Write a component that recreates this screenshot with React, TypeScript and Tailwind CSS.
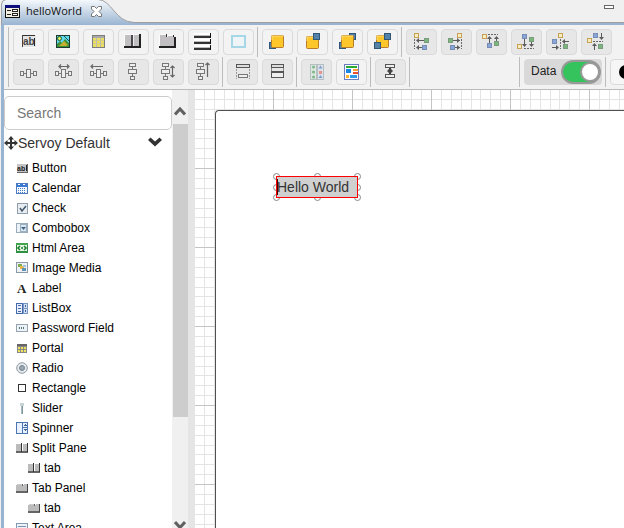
import React from "react";

type R = [number, number, number, number, string];

function Px({ r, w = 21, h = 18, faded, children }: { r?: R[]; w?: number; h?: number; faded?: boolean; children?: React.ReactNode }) {
  return (
    <svg width={w} height={h} viewBox={`0 0 ${w} ${h}`} className={faded ? "shrink-0 overflow-visible opacity-70" : "shrink-0 overflow-visible"} aria-hidden="true">
      <g shapeRendering="crispEdges">
        {(r ?? []).map(([x, y, rw, rh, f], i) => (
          <rect key={i} x={x} y={y} width={rw} height={rh} fill={f} />
        ))}
      </g>
      {children}
    </svg>
  );
}

const box = (x: number, y: number, w: number, h: number, edge: string, fill: string, t = 1): R[] => [
  [x, y, w, h, edge],
  [x + t, y + t, w - 2 * t, h - 2 * t, fill],
];

/* Palette widgets on the first toolbar row */
const imageIcon = (
  <Px r={[...box(3, 2, 14, 13, "#1d3a30", "#5fd8ec"), [5, 4, 3, 3, "#f5e04a"], [4, 13, 12, 1, "#3f6e22"]]}>
    <path d="M4 14V11l3-3 2 2 3-4 4 4v4z" fill="#3e8e3a" />
    <path d="M6 13l5-5 4 4-2 1z" fill="#c3b02e" />
    <path d="M11 3l5 5" stroke="#14584d" />
    <circle cx="6.500" cy="5.500" r="2" fill="#dff05a" stroke="#1c5a44" />
  </Px>
);
const tableIcon = (
  <Px
    r={[
      [4, 2, 13, 13, "#7d7d7d"], [5, 3, 11, 2, "#a9a9a9"], [5, 5, 11, 9, "#b9b9b4"],
      [5, 5, 3, 9, "#eadf62"], [9, 5, 3, 9, "#eadf62"], [13, 5, 3, 9, "#eadf62"],
      [5, 7, 11, 1, "#d2cb8b"], [5, 10, 11, 1, "#d2cb8b"],
    ]}
  />
);
const splitIcon = (
  <Px r={[[1, 1, 17, 14, "#fafafa"], [2, 2, 15, 12, "#c1bfc1"], [1, 13, 17, 2, "#222"], [8, 2, 2, 11, "#4c4c4c"], [10, 2, 1, 11, "#eee"], [16, 1, 2, 14, "#222"]]} />
);
const tabIcon = (
  <Px r={[[1, 1, 8, 13, "#fafafa"], [2, 2, 7, 11, "#c1bfc1"], [8, 4, 9, 9, "#c1bfc1"], [8, 1, 1, 3, "#333"], [10, 2, 6, 1, "#fafafa"], [10, 3, 5, 1, "#c1bfc1"], [15, 2, 1, 2, "#222"], [16, 4, 2, 11, "#222"], [1, 13, 17, 2, "#222"]]} />
);
const barsIcon = (
  <Px
    r={[0, 6, 12].flatMap((y): R[] => [
      [1, y, 17, 3, "#fff"], [1, y + 2, 17, 1, "#bbb"], [1, y + 3, 17, 2, "#333"], [17, y, 1, 5, "#111"],
    ])}
  />
);

/* Stacking order icons */
const yel = (x: number, y: number) => (
  <g>
    <rect x={x + 0.5} y={y + 0.5} width="12" height="12" rx="1" fill="#fdc62b" stroke="#b77b2c" />
    <path d={`M${x + 1} ${y + 5}V${y + 1}H${x + 12}`} stroke="#ffe27b" fill="none" />
  </g>
);
const blu = (x: number, y: number) => <rect x={x + 0.5} y={y + 0.5} width="6" height="6" fill="#5583a8" stroke="#2f5878" />;

/* Alignment icons: three squares, a dashed guide and arrows between them */
function Align({ y, g, b, dash, shafts, heads }: { y: [number, number]; g: [number, number]; b: [number, number]; dash: string; shafts: string; heads: string }) {
  return (
    <Px faded r={[...box(y[0], y[1], 5, 5, "#b88318", "#fff0ae"), ...box(g[0], g[1], 5, 5, "#4c7d52", "#4fa052"), ...box(b[0], b[1], 5, 5, "#4867a0", "#628bcf")]}>
      <path d={dash} stroke="#333" strokeDasharray="2 1" shapeRendering="crispEdges" />
      <path d={shafts} stroke="#222" shapeRendering="crispEdges" />
      <path d={heads} fill="#222" />
    </Px>
  );
}

const G = "#777";
const horiz: R[] = [[5, 10, 12, 1, G], ...box(2, 8, 4, 5, G, "#eee"), ...box(8, 6, 5, 9, G, "#eee"), ...box(15, 8, 4, 5, G, "#eee")];
const vert = (x: number): R[] => [[x + 4, 1, 1, 15, G], ...box(x + 1, 0, 7, 4, G, "#eee"), ...box(x, 6, 9, 5, G, "#eee"), ...box(x + 2, 13, 5, 4, G, "#eee")];
const line = (d: string) => <path d={d} stroke="#666" fill="none" strokeWidth="1.200" />;

type Tool = { name: string; icon: React.ReactNode; off?: boolean };

const row1: Tool[][] = [
  [
    {
      name: "Button",
      icon: (
        <Px r={[[4, 2, 14, 13, "#e4e4e4"], [4, 2, 13, 1, "#333"], [4, 2, 1, 12, "#444"], [5, 14, 13, 1, "#fff"], [16, 5, 1, 8, "#222"]]}>
          <text x="5" y="12" className="font-['Liberation_Sans',Arial,sans-serif] text-[10px] font-bold" fill="#444">ab</text>
        </Px>
      ),
    },
    { name: "Image", icon: imageIcon },
    { name: "Portal", icon: tableIcon },
    { name: "Split pane", icon: splitIcon },
    { name: "Tab panel", icon: tabIcon },
    { name: "Accordion", icon: barsIcon },
    { name: "Group", icon: <Px r={box(3, 2, 15, 13, "#a6d7e6", "#eff5f7", 2)} /> },
  ],
  [
    { name: "Send backward", icon: <Px>{blu(2, 9)}{yel(4, 2)}</Px> },
    { name: "Bring forward", icon: <Px>{yel(4, 3)}{blu(11, 0)}</Px> },
    { name: "Send to back", icon: <Px>{blu(2, 9)}{blu(12, 0)}{yel(4, 2)}</Px> },
    { name: "Bring to front", icon: <Px>{yel(4, 2)}{blu(2, 9)}{blu(12, 0)}</Px> },
  ],
  [
    { name: "Align left", off: true, icon: <Align y={[3, 0]} g={[13, 5]} b={[11, 12]} dash="M3.500 6V16" shafts="M6 7.500H13M6 14.500H11" heads="M5 7.500l3-2.500v5zM5 14.500l3-2.500v5z" /> },
    { name: "Align right", off: true, icon: <Align y={[11, 0]} g={[2, 5]} b={[4, 12]} dash="M15.500 6V16" shafts="M7 7.500H14M9 14.500H14" heads="M14 7.500l-3-2.500v5zM14 14.500l-3-2.500v5z" /> },
    { name: "Align top", off: true, icon: <Align y={[1, 1]} g={[13, 8]} b={[6, 10]} dash="M7 1.500H17" shafts="M8.500 4V10M15.500 4V8" heads="M8.500 3l-2.500 3h5zM15.500 3l-2.500 3h5z" /> },
    { name: "Align bottom", off: true, icon: <Align y={[1, 11]} g={[13, 4]} b={[6, 1]} dash="M8 15.500H18" shafts="M8.500 6V13M15.500 9V13" heads="M8.500 14l-2.500-3h5zM15.500 14l-2.500-3h5z" /> },
    { name: "Align center", off: true, icon: <Align y={[7, 0]} g={[12, 11]} b={[1, 6]} dash="M9.500 6V16" shafts="M12 8.500H18M1 14.500H7" heads="M11 8.500l3-2.500v5zM8 14.500l-3-2.500v5z" /> },
    { name: "Align middle", off: true, icon: <Align y={[1, 5]} g={[12, 11]} b={[7, 0]} dash="M7 8.500H17" shafts="M15.500 0V6M8.500 11V17" heads="M15.500 7l-2.500-3h5zM8.500 10l-2.500 3h5z" /> },
  ],
];

const row2: Tool[][] = [
  [
    { name: "Distribute horizontal spacing", off: true, icon: <Px r={horiz} /> },
    { name: "Distribute horizontal centers", off: true, icon: <Px r={horiz}>{line("M6 3.500H16M8 1.500L6 3.500L8 5.500M14 1.500L16 3.500L14 5.500")}</Px> },
    { name: "Distribute leftward", off: true, icon: <Px r={horiz}>{line("M3 3.500H15M5 1.500L3 3.500L5 5.500")}</Px> },
    { name: "Distribute vertical spacing", off: true, icon: <Px r={vert(5)} /> },
    { name: "Distribute vertical centers", off: true, icon: <Px r={vert(3)}>{line("M14.500 3V14M12.500 5L14.500 3L16.500 5M12.500 12L14.500 14L16.500 12")}</Px> },
    { name: "Distribute upward", off: true, icon: <Px r={vert(3)}>{line("M14.500 0V14M12.500 2L14.500 0L16.500 2")}</Px> },
  ],
  [
    {
      name: "Same width", off: true,
      icon: (
        <Px r={[...box(4, 1, 14, 4, "#555", "#ddd"), ...box(6, 11, 10, 4, "#777", "#eee")]}>
          <path d="M4.500 6V16M17.500 6V16" stroke="#999" strokeDasharray="2 1" shapeRendering="crispEdges" />
        </Px>
      ),
    },
    { name: "Same height", off: true, icon: <Px r={[...box(4, 1, 13, 4, "#555", "#ddd"), [4, 5, 1, 4, "#888"], [16, 5, 1, 4, "#888"], [4, 8, 13, 2, "#555"], ...box(4, 9, 13, 6, "#555", "#eee")]} /> },
  ],
  [
    {
      name: "Anchoring", off: true,
      icon: (
        <Px faded r={[...box(4, 1, 7, 16, "#a1aeb0", "#d9ead9"), ...box(11, 1, 7, 16, "#a1aeb0", "#d8e1ef")]}>
          {[4, 9, 14].map((y) => <circle key={y} cx="7.500" cy={y} r="1.500" fill="#52a069" />)}
          <path d="M14.500 2.500l2 3h-4zM14.500 12l2 3h-4z" fill="#537fbe" /><rect x="13" y="8" width="3" height="3" fill="#e57360" />
        </Px>
      ),
    },
    {
      name: "Tab sequence",
      icon: <Px r={[...box(3, 1, 15, 16, "#6d7dbe", "#fff"), [5, 3, 11, 2, "#2ca92f"], [5, 6, 5, 4, "#1b87e5"], [12, 6, 5, 2, "#ff9d31"], [12, 9, 5, 2, "#e95030"], [5, 12, 3, 3, "#ffb328"], [9, 12, 7, 3, "#329be9"]]} />,
    },
  ],
  [
    {
      name: "Zoom to fit", off: true,
      icon: <Px r={[...box(5, 1, 10, 4, "#555", "#eee"), ...box(5, 11, 10, 4, "#555", "#eee"), [9, 5, 2, 6, "#333"]]}><path d="M7 8l3-3 3 3-3 3z" fill="#444" /></Px>,
    },
  ],
];

function Sep() {
  return <span className="mx-[3px] w-px shrink-0 self-stretch bg-[#bcbcbc]" />;
}

function ToolButton({ tool }: { tool: Tool }) {
  return (
    <button
      type="button"
      aria-label={tool.name}
      disabled={tool.off}
      className={`flex h-[26px] w-[31px] shrink-0 items-center justify-center rounded border border-[#dadada] ${tool.off ? "bg-[#e7e7e7]" : "bg-[#f3f3f3]"}`}
    >
      {tool.icon}
    </button>
  );
}

function ToolGroups({ groups }: { groups: Tool[][] }) {
  return (
    <>
      {groups.map((g, i) => (
        <React.Fragment key={i}>
          <div className="flex shrink-0 items-center gap-1 pl-px">
            {g.map((t) => <ToolButton key={t.name} tool={t} />)}
          </div>
          {(i < groups.length - 1 || groups === row2) && <Sep />}
        </React.Fragment>
      ))}
    </>
  );
}

/* Palette icons, 12 by 12 */
const splitSmall = <Px w={12} h={12} r={[[0, 2, 12, 9, "#bcbcbc"], [0, 9, 12, 2, "#666"], [5, 1, 1, 9, "#333"], [6, 2, 1, 7, "#fff"], [11, 1, 1, 9, "#333"]]} />;
const tabSmall = <Px w={12} h={12} r={[[0, 3, 12, 8, "#bcbcbc"], [1, 2, 5, 1, "#ccc"], [6, 2, 1, 2, "#666"], [8, 2, 3, 2, "#bcbcbc"], [0, 9, 12, 2, "#666"], [11, 2, 1, 8, "#444"]]} />;
const listSmall = (
  <Px w={12} h={12} r={[...box(0, 1, 7, 11, "#4569ad", "#e8effb"), [2, 3, 3, 1, "#4569ad"], [2, 6, 3, 1, "#4569ad"], [2, 9, 3, 1, "#4569ad"], ...box(7, 1, 5, 6, "#7897c5", "#d4e2f5"), ...box(7, 6, 5, 6, "#7897c5", "#d4e2f5"), [9, 3, 1, 2, "#3e5f94"], [9, 8, 1, 2, "#3e5f94"]]} />
);

const items: { label: string; icon: React.ReactNode; sub?: boolean }[] = [
  {
    label: "Button",
    icon: <Px w={12} h={12} r={[[1, 2, 11, 9, "#c4c4c4"], [1, 10, 11, 1, "#666"], [11, 2, 1, 9, "#666"], [10, 3, 1, 6, "#222"]]}><text x="1" y="9" className="font-['Liberation_Sans',Arial,sans-serif] text-[7px] font-bold" fill="#222">ab</text></Px>,
  },
  { label: "Calendar", icon: <Px w={12} h={12} r={[...box(0, 1, 12, 11, "#4c7bc0", "#f3f8ff"), [1, 2, 10, 3, "#3c79d2"], [2, 2, 2, 1, "#fff"], [7, 2, 2, 1, "#fff"], ...[6, 8, 10].flatMap((y): R[] => [2, 4, 6, 8].map((x): R => [x, y, 1, 1, "#4d80c7"]))]} /> },
  { label: "Check", icon: <Px w={12} h={12} r={box(1, 1, 11, 11, "#8d9eae", "#e9edf0")}><path d="M4 6l2 3 4-5" stroke="#40586e" fill="none" strokeWidth="1.500" /></Px> },
  { label: "Combobox", icon: <Px w={12} h={12} r={[...box(0, 1, 12, 10, "#9cabbc", "#edf2f7"), ...box(4, 2, 7, 8, "#9cb0c4", "#dbe6f0")]}><path d="M5 5h5l-2.500 3z" fill="#3f6585" /></Px> },
  { label: "Html Area", icon: <Px w={12} h={12} r={[...box(0, 1, 12, 10, "#2c843c", "#e7f5e4"), [0, 1, 12, 2, "#42a550"], [0, 9, 12, 2, "#2d9141"]]}><path d="M4 4L2 6l2 2M8 4l2 2-2 2M5 6h2" stroke="#167a29" fill="none" strokeWidth="1.500" /></Px> },
  { label: "Image Media", icon: <Px w={12} h={12} r={[...box(0, 0, 12, 11, "#8b9aaa", "#edf1f5"), [2, 2, 4, 3, "#7faa4f"], [4, 4, 4, 3, "#e6b64b"], [6, 6, 4, 3, "#5d93b7"], [7, 3, 3, 2, "#9fc0df"]]} /> },
  { label: "Label", icon: <Px w={12} h={12}><text x="1" y="11" className="font-['Liberation_Serif',serif] text-[13px] font-bold" fill="#222">A</text></Px> },
  { label: "ListBox", icon: listSmall },
  { label: "Password Field", icon: <Px w={12} h={12} r={[...box(0, 2, 12, 8, "#94a4b2", "#edf2f6"), [3, 5, 1, 2, "#60727e"], [5, 5, 1, 2, "#60727e"], [7, 5, 1, 2, "#60727e"]]} /> },
  { label: "Portal", icon: <Px w={12} h={12} r={[[1, 2, 10, 9, "#888"], [1, 2, 10, 2, "#666"], [2, 5, 2, 2, "#efe45b"], [5, 5, 2, 2, "#efe45b"], [8, 5, 2, 2, "#efe45b"], [2, 8, 2, 2, "#efe45b"], [5, 8, 2, 2, "#efe45b"], [8, 8, 2, 2, "#efe45b"]]} /> },
  { label: "Radio", icon: <Px w={12} h={12}><circle cx="6" cy="6" r="5.300" fill="#e8ecef" stroke="#8d9aa5" /><circle cx="6" cy="6" r="2.500" fill="#9aa7b2" stroke="#75838e" /></Px> },
  { label: "Rectangle", icon: <Px w={12} h={12} r={box(2, 2, 8, 8, "#333", "#fff")} /> },
  { label: "Slider", icon: <Px w={12} h={12} r={[[5, 1, 2, 11, "#a9bbc1"], [4, 1, 4, 3, "#c9d4d7"], [6, 4, 1, 8, "#82989f"]]} /> },
  { label: "Spinner", icon: <Px w={12} h={12} r={[...box(0, 0, 12, 12, "#4c75b4", "#e9f2ff"), [6, 0, 1, 12, "#4c75b4"], [7, 5, 5, 1, "#4c75b4"], [8, 3, 3, 1, "#405f8a"], [9, 2, 1, 1, "#405f8a"], [8, 7, 3, 1, "#405f8a"], [9, 8, 1, 1, "#405f8a"]]} /> },
  { label: "Split Pane", icon: splitSmall },
  { label: "tab", icon: splitSmall, sub: true },
  { label: "Tab Panel", icon: tabSmall },
  { label: "tab", icon: tabSmall, sub: true },
  { label: "Text Area", icon: <Px w={12} h={12} r={[...box(0, 1, 12, 11, "#8299b4", "#edf3f8"), [2, 4, 8, 1, "#7b91aa"], [2, 7, 8, 1, "#7b91aa"]]} /> },
];

function TitleBar() {
  return (
    <header className="relative flex h-[25px] shrink-0 items-start bg-[#f0f0f0]">
      <div className="absolute inset-x-0 bottom-0 h-[3px] border-t border-[#a0a0a0] bg-[#99b4d1]" />
      <svg width="140" height="25" viewBox="0 0 140 25" className="absolute left-0 top-0" aria-hidden="true">
        <defs>
          <linearGradient id="tab" x1="0" y1="0" x2="0" y2="1">
            <stop offset="0" stopColor="#f4f8fc" />
            <stop offset="1" stopColor="#99b4d1" />
          </linearGradient>
        </defs>
        <rect width="2" height="25" fill="#f0f0f0" />
        <path d="M2 25V4Q2 0 6 0H98C112 0 115 22 134 22.500V25Z" fill="url(#tab)" />
        <path d="M1.500 25V4Q2 0 6 -0.500M98 -0.500C112 0 115 22 134 22.500" fill="none" stroke="#a0a0a0" />
      </svg>
      <div className="relative flex h-[22px] items-center pl-[5px]">
        <Px w={15} h={13} r={[[0, 0, 15, 13, "#111"], [0, 0, 15, 3, "#10107c"], [1, 3, 13, 9, "#f2eee2"], [2, 5, 4, 1, "#222"], [2, 9, 4, 1, "#222"], ...box(7, 4, 6, 3, "#222", "#fff"), ...box(7, 8, 6, 3, "#222", "#fff")]} />
        <span className="ml-[6px] pb-px font-['Open_Sans','Noto_Sans',sans-serif] text-[11px] leading-4 text-[#111]">helloWorld</span>
        <button type="button" aria-label="Close helloWorld" className="ml-[9px]">
          <svg width="11" height="11" viewBox="0 0 11 11">
            <path d="M.5.5h3l2 2 2-2h3v2.500L8 5.500l2.500 2.500v2.500h-3l-2-2-2 2h-3V8L3 5.500.5 3z" fill="#fff" stroke="#777" />
          </svg>
        </button>
      </div>
      <button type="button" aria-label="Minimize" className="relative ml-auto mr-[10px] mt-[5px] h-1 w-[10px] border border-[#666] bg-white" />
    </header>
  );
}

function Toolbar() {
  return (
    <div className="flex h-[65px] shrink-0 overflow-hidden border-b border-[#bababa] bg-[#f2f2f2] pl-1 pt-[2px]">
      <span className="mr-[3px] h-[60px] w-px shrink-0 bg-[#bcbcbc]" />
      <div className="flex min-w-0 flex-1 flex-col">
        <div className="flex h-[30px] items-center">
          <ToolGroups groups={row1} />
        </div>
        <div className="flex h-[30px] items-center">
          <ToolGroups groups={row2} />
          <span className="w-[103px] shrink-0" />
          <Sep />
          <label className="ml-px flex h-[26px] shrink-0 items-center gap-[5px] rounded-sm bg-[#d9d9d9] pl-[7px] pr-px text-xs text-[#222]">
            <span className="pb-[3px]">Data</span>
            <span className="relative flex h-6 w-10">
              <input type="checkbox" role="switch" defaultChecked className="h-6 w-10 appearance-none rounded-full border-2 border-[#999] bg-[#a5b5a9] checked:bg-[#35c35d]" />
              <span className="pointer-events-none absolute right-px top-[2px] h-5 w-5 rounded-full border-2 border-[#999] bg-white" />
            </span>
          </label>
          <Sep />
          <div className="shrink-0 pl-px">
            <button type="button" aria-label="Contrast" className="flex h-[26px] w-[31px] items-center justify-center rounded border border-[#dadada] bg-[#f6f6f6]">
              <svg width="14" height="14" viewBox="0 0 14 14"><circle cx="7" cy="7" r="7" fill="#000" /></svg>
            </button>
          </div>
        </div>
      </div>
    </div>
  );
}

function Palette() {
  return (
    <aside className="flex w-[184px] shrink-0 bg-white">
      <div className="min-w-0 flex-1 overflow-hidden pt-[6px]">
        <input type="text" aria-label="Search" placeholder="Search" className="block h-[34px] w-full rounded-[5px] border border-[#ccc] bg-white px-3 text-sm placeholder:text-[#777]" />
        <button type="button" className="flex h-[25px] w-full items-center text-sm text-[#333]">
          <svg width="14" height="14" viewBox="0 0 14 14" aria-hidden="true">
            <path d="M7 0l3 3.500H8V6h2.500V4L14 7l-3.500 3V8H8v2.500h2L7 14l-3-3.500h2V8H3.500v2L0 7l3.500-3v2H6V3.500H4z" fill="#333" />
          </svg>
          <span>Servoy Default</span>
          <svg width="14" height="10" viewBox="0 0 14 10" className="mb-[2px] ml-auto mr-[10px]" aria-hidden="true">
            <path d="M0 3l2.500-2.500L7 4.500 11.500.5 14 3 7 9.500z" fill="#333" />
          </svg>
        </button>
        <ul className="pt-[3px] text-xs text-black">
          {items.map((it, i) => (
            <li key={i} className={`flex h-5 items-center gap-1 whitespace-nowrap ${it.sub ? "pl-6" : "pl-3"}`}>
              {it.icon}
              <span>{it.label}</span>
            </li>
          ))}
        </ul>
      </div>
      <div className="flex w-4 shrink-0 flex-col items-center justify-between bg-[#f0f0f0]">
        <div className="flex h-[34px] shrink-0 items-center pt-[8px]">
          <svg width="12" height="10" viewBox="0 0 12 10" aria-hidden="true"><path d="M1 8.500L6 3l5 5.500" stroke="#606060" strokeWidth="3" fill="none" /></svg>
        </div>
        <div className="flex w-full flex-1 flex-col pl-px">
          <div className="h-[74%] bg-[#cdcdcd]" />
        </div>
        <svg width="12" height="8" viewBox="0 0 12 8" className="shrink-0" aria-hidden="true"><path d="M1 2l5 5.500L11 2" stroke="#606060" strokeWidth="3" fill="none" /></svg>
      </div>
    </aside>
  );
}

const minor = [10, 20, 30, 40, 49, 59, 69];
const handles = [
  "-left-[3px] -top-[3px]", "left-1/2 -ml-[3px] -top-[3px]", "-right-[3px] -top-[3px]",
  "-left-[3px] top-1/2 -mt-[3px]", "-right-[3px] top-1/2 -mt-[3px]",
  "-left-[3px] -bottom-[3px]", "left-1/2 -ml-[3px] -bottom-[3px]", "-right-[3px] -bottom-[3px]",
];

function Canvas() {
  return (
    <main className="relative min-w-0 flex-1 overflow-hidden bg-white pl-5 pt-5">
      <svg className="absolute left-0 top-0 h-full w-full" aria-hidden="true">
        <defs>
          <pattern id="grid" x="-1" y="-1" width="79" height="79" patternUnits="userSpaceOnUse">
            <g shapeRendering="crispEdges">
              {minor.map((m) => (
                <g key={m} fill="#e4e4e4">
                  <rect x={m} y="0" width="1" height="79" />
                  <rect x="0" y={m} width="79" height="1" />
                </g>
              ))}
              <path d="M0 0h79v1H1v78H0z" fill="#c4c4c4" />
            </g>
          </pattern>
        </defs>
        <rect width="100%" height="100%" fill="url(#grid)" />
      </svg>
      <div className="relative h-full rounded-tl border-l border-t border-[#505050] bg-white">
        <div className="absolute left-[60px] top-[65px] h-[22px] w-[82px]">
          {handles.map((h) => (
            <span key={h} className={`absolute h-[7px] w-[7px] rounded-full border border-[#888] bg-white ${h}`} />
          ))}
          <div className="relative h-full w-full border border-[#f00] bg-[#d0d0d0] text-sm leading-5 text-[#333]">
            Hello World
            <span className="absolute left-0 top-[2px] h-4 w-px bg-[#400]" />
          </div>
        </div>
      </div>
    </main>
  );
}

export default function App() {
  return (
    <div className="flex h-screen flex-col overflow-hidden bg-[#f0f0f0] font-['Liberation_Sans',Arial,sans-serif]">
      <TitleBar />
      <div className="ml-[1px] flex min-h-0 flex-1 flex-col border-l-[3px] border-[#99b4d1]">
        <Toolbar />
        <div className="flex min-h-0 flex-1">
          <Palette />
          <div className="w-[7px] shrink-0 bg-[#e5e5e5]" />
          <Canvas />
        </div>
      </div>
    </div>
  );
}
